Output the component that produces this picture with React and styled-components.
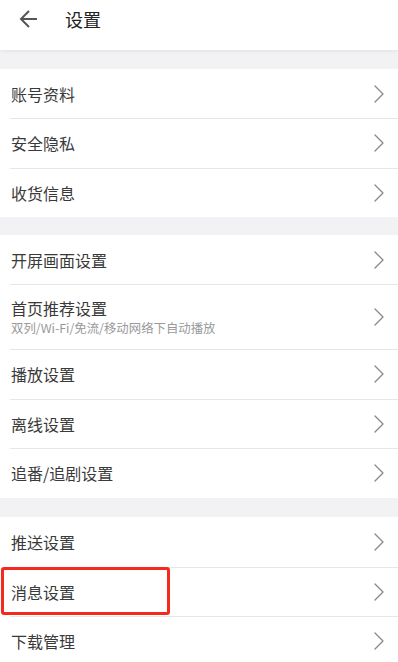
import React from "react";
import styled, { createGlobalStyle } from "styled-components";

const Global = createGlobalStyle`
  html, body { margin: 0; padding: 0; background: #f2f2f4; }
  body { font-family: "Noto Sans CJK SC", "Noto Sans", sans-serif; }
  * { box-sizing: border-box; }
`;

const Page = styled.div`
  width: 398px;
  min-height: 662px;
  background: #f2f2f4;
  overflow: hidden;
`;

const Header = styled.header`
  height: 50px;
  background: #fff;
  display: flex;
  align-items: center;
  box-shadow: 0 1px 4px rgba(0, 0, 0, 0.08);
  position: relative;
  z-index: 1;
`;

const BackBtn = styled.div`
  width: 58px;
  height: 50px;
  display: flex;
  align-items: center;
  padding-left: 19px;
  padding-bottom: 13px;
`;

const Title = styled.h1`
  margin: 0;
  font-size: 18px;
  font-weight: 400;
  color: #222;
  line-height: 1;
  padding-left: 7px;
  padding-bottom: 13px;
`;

const Section = styled.section`
  background: #fff;
  margin-top: ${(p) => p.$gap}px;
`;

const Row = styled.div`
  position: relative;
  display: flex;
  align-items: center;
  height: ${(p) => p.$h}px;
  padding: 0 14px 0 11px;
  &::before {
    content: "";
    display: ${(p) => (p.$first ? "none" : "block")};
    position: absolute;
    left: 10px;
    right: 0;
    top: 0;
    height: 1px;
    background: #e6e6e6;
  }
`;

const Texts = styled.div`
  flex: 1;
  display: flex;
  flex-direction: column;
  justify-content: center;
`;

const Label = styled.div`
  font-size: 16px;
  color: #3a3a3a;
  line-height: 20px;
`;

const Sub = styled.div`
  font-size: 12.4px;
  color: #999;
  line-height: 16px;
  margin-top: 2px;
`;

const Highlight = styled.div`
  position: absolute;
  left: 1px;
  top: 0px;
  width: 169px;
  height: 48px;
  border: 3px solid #f42a1e;
  border-radius: 3px;
  pointer-events: none;
`;

const Chevron = () => (
  <svg width="10" height="18" viewBox="0 0 10 18" fill="none">
    <path d="M1 1 L9 9 L1 17" stroke="#888" strokeWidth="1.3" strokeLinecap="round" strokeLinejoin="round" />
  </svg>
);

const BackArrow = () => (
  <svg width="20" height="20" viewBox="0 0 20 20" fill="none">
    <path d="M18 10 H2.5 M10 2 L2 10 L10 18" stroke="#555" strokeWidth="2" strokeLinejoin="miter" />
  </svg>
);

const sections = [
  {
    gap: 19,
    rows: [
      { label: "账号资料", h: 49 },
      { label: "安全隐私", h: 50 },
      { label: "收货信息", h: 49 },
    ],
  },
  {
    gap: 18,
    rows: [
      { label: "开屏画面设置", h: 49 },
      { label: "首页推荐设置", sub: "双列/Wi-Fi/免流/移动网络下自动播放", h: 65 },
      { label: "播放设置", h: 50 },
      { label: "离线设置", h: 49 },
      { label: "追番/追剧设置", h: 50 },
    ],
  },
  {
    gap: 19,
    rows: [
      { label: "推送设置", h: 50 },
      { label: "消息设置", h: 49, highlight: true },
      { label: "下载管理", h: 49 },
    ],
  },
];

export default function App() {
  return (
    <Page>
      <Global />
      <Header>
        <BackBtn>
          <BackArrow />
        </BackBtn>
        <Title>设置</Title>
      </Header>
      {sections.map((s, si) => (
        <Section key={si} $gap={s.gap}>
          {s.rows.map((r, ri) => (
            <Row key={ri} $h={r.h} $first={ri === 0}>
              <Texts>
                <Label>{r.label}</Label>
                {r.sub && <Sub>{r.sub}</Sub>}
              </Texts>
              <Chevron />
              {r.highlight && <Highlight />}
            </Row>
          ))}
        </Section>
      ))}
    </Page>
  );
}
